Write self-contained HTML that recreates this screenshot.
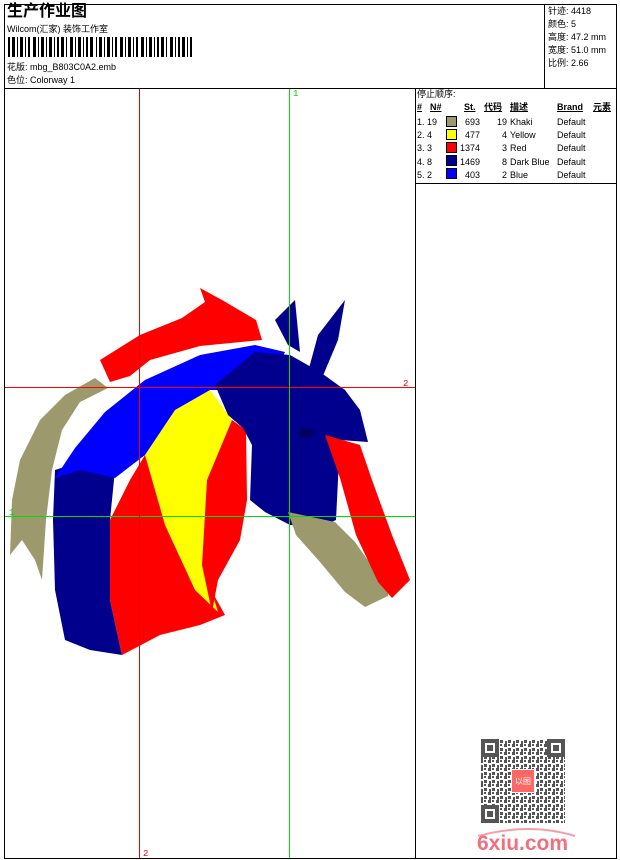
<!DOCTYPE html>
<html><head><meta charset="utf-8"><style>
*{margin:0;padding:0}
body{width:620px;height:860px;background:#fff;position:relative;overflow:hidden;font-family:"Liberation Sans","Noto Sans CJK SC",sans-serif;font-size:9px;color:#000}
.a{position:absolute;white-space:nowrap;line-height:11px}
.l{position:absolute;background:#000}
.u{text-decoration:underline;font-weight:bold}
.sw{position:absolute;width:9px;height:9px;border:1px solid #000}
</style></head><body>
<div class="l" style="left:4px;top:4px;width:613px;height:1px"></div>
<div class="l" style="left:4px;top:858px;width:613px;height:1px"></div>
<div class="l" style="left:4px;top:4px;width:1px;height:855px"></div>
<div class="l" style="left:616px;top:4px;width:1px;height:855px"></div>
<div class="l" style="left:4px;top:88px;width:613px;height:1px"></div>
<div class="l" style="left:544px;top:4px;width:1px;height:84px"></div>
<div class="l" style="left:415px;top:88px;width:1px;height:770px"></div>
<div class="l" style="left:415px;top:183px;width:202px;height:1px"></div>

<div class="a" style="left:7px;top:3px;font-size:16px;line-height:18px;font-weight:bold">生产作业图</div>
<div class="a" style="left:7px;top:24px">Wilcom(汇家) 装饰工作室</div>
<svg style="position:absolute;left:8px;top:37px" width="185" height="20">
<g fill="#000">
<rect x="0" y="0" width="2" height="20"/><rect x="4" y="0" width="3" height="20"/><rect x="9" y="0" width="1" height="20"/><rect x="12" y="0" width="3" height="20"/><rect x="17" y="0" width="1" height="20"/><rect x="20" y="0" width="2" height="20"/><rect x="25" y="0" width="3" height="20"/><rect x="30" y="0" width="1" height="20"/><rect x="33" y="0" width="3" height="20"/><rect x="38" y="0" width="1" height="20"/><rect x="41" y="0" width="3" height="20"/><rect x="46" y="0" width="1" height="20"/><rect x="49" y="0" width="2" height="20"/><rect x="53" y="0" width="3" height="20"/><rect x="58" y="0" width="1" height="20"/><rect x="62" y="0" width="3" height="20"/><rect x="67" y="0" width="1" height="20"/><rect x="70" y="0" width="3" height="20"/><rect x="75" y="0" width="1" height="20"/><rect x="78" y="0" width="2" height="20"/><rect x="82" y="0" width="3" height="20"/><rect x="88" y="0" width="1" height="20"/><rect x="91" y="0" width="3" height="20"/><rect x="96" y="0" width="1" height="20"/><rect x="99" y="0" width="3" height="20"/><rect x="104" y="0" width="1" height="20"/><rect x="107" y="0" width="2" height="20"/><rect x="112" y="0" width="3" height="20"/><rect x="117" y="0" width="1" height="20"/><rect x="120" y="0" width="3" height="20"/><rect x="125" y="0" width="1" height="20"/><rect x="128" y="0" width="2" height="20"/><rect x="133" y="0" width="3" height="20"/><rect x="138" y="0" width="1" height="20"/><rect x="141" y="0" width="3" height="20"/><rect x="146" y="0" width="1" height="20"/><rect x="149" y="0" width="2" height="20"/><rect x="153" y="0" width="3" height="20"/><rect x="158" y="0" width="1" height="20"/><rect x="162" y="0" width="3" height="20"/><rect x="167" y="0" width="1" height="20"/><rect x="170" y="0" width="2" height="20"/><rect x="174" y="0" width="3" height="20"/><rect x="179" y="0" width="1" height="20"/><rect x="182" y="0" width="2" height="20"/>
</g></svg>
<div class="a" style="left:7px;top:62px">花版: mbg_B803C0A2.emb</div>
<div class="a" style="left:7px;top:75px">色位: Colorway 1</div>

<div class="a" style="left:548px;top:5px;line-height:13px">针迹: 4418<br>颜色: 5<br>高度: 47.2 mm<br>宽度: 51.0 mm<br>比例: 2.66</div>

<div class="a" style="left:417px;top:89px">停止顺序:</div>
<div class="a u" style="left:417px;top:102px">#</div>
<div class="a u" style="left:430px;top:102px">N#</div>
<div class="a u" style="left:464px;top:102px">St.</div>
<div class="a u" style="left:484px;top:102px">代码</div>
<div class="a u" style="left:510px;top:102px">描述</div>
<div class="a u" style="left:557px;top:102px">Brand</div>
<div class="a u" style="left:593px;top:102px">元素</div>

<div class="a" style="left:417px;top:116px;line-height:13.2px">1. 19<br>2. 4<br>3. 3<br>4. 8<br>5. 2</div>
<div class="sw" style="left:446px;top:116px;background:#9c9a6c"></div>
<div class="sw" style="left:446px;top:129px;background:#ff0"></div>
<div class="sw" style="left:446px;top:142px;background:#f00"></div>
<div class="sw" style="left:446px;top:155px;background:#00008c"></div>
<div class="sw" style="left:446px;top:168px;background:#00f"></div>
<div class="a" style="left:455px;width:25px;text-align:right;top:116px;line-height:13.2px">693<br>477<br>1374<br>1469<br>403</div>
<div class="a" style="left:485px;width:22px;text-align:right;top:116px;line-height:13.2px">19<br>4<br>3<br>8<br>2</div>
<div class="a" style="left:510px;top:116px;line-height:13.2px">Khaki<br>Yellow<br>Red<br>Dark Blue<br>Blue</div>
<div class="a" style="left:557px;top:116px;line-height:13.2px">Default<br>Default<br>Default<br>Default<br>Default</div>

<svg style="position:absolute;left:0;top:0" width="620" height="860">
<defs>
<pattern id="qr" width="8" height="8" patternUnits="userSpaceOnUse">
<rect x="0" y="0" width="3" height="3" fill="#555"/><rect x="4" y="4" width="3" height="3" fill="#555"/><rect x="4" y="0" width="2" height="2" fill="#555"/><rect x="1" y="5" width="2" height="3" fill="#555"/>
</pattern>
<pattern id="st" width="3" height="4" patternUnits="userSpaceOnUse">
<rect x="0" y="0" width="3" height="4" fill="#fff" opacity=".35"/>
</pattern>
</defs>
<g stroke="none">
<polygon fill="#9c9a6c" points="10,555 12,500 20,460 40,420 65,395 95,378 108,388 80,402 62,430 52,470 46,520 42,580 35,560 22,540"/>
<polygon fill="#00008c" points="55,470 80,462 115,470 110,520 110,600 122,655 90,650 65,640 55,590 53,520"/>
<polygon fill="#f00" points="110,520 130,480 145,455 175,520 200,570 225,615 200,625 160,635 122,655 110,600"/>
<polygon fill="#ff0" points="145,455 175,410 210,390 232,420 208,480 202,560 218,612 195,590 165,525"/>
<polygon fill="#f00" points="232,420 246,430 247,500 240,540 218,580 212,612 202,565 207,480"/>
<polygon fill="#00f" points="55,478 75,448 105,412 145,380 200,355 255,345 285,352 275,372 232,390 210,390 175,410 145,455 115,478 80,470"/>
<polygon fill="#00008c" points="215,385 255,352 290,355 320,372 345,390 360,410 368,442 340,440 336,520 320,527 290,525 265,512 250,500 252,445 243,428 228,415"/>
<polygon fill="#9c9a6c" points="288,512 335,522 355,542 378,575 392,568 388,596 365,607 345,592 320,562 296,535"/>
<polygon fill="#f00" points="325,435 360,445 372,480 392,535 410,580 392,598 378,582 356,535 340,478"/>
<polygon fill="#00008c" points="275,320 295,300 300,352 288,345"/>
<polygon fill="#00008c" points="308,372 318,335 345,300 338,340 322,378"/>
<polygon fill="#f00" points="100,360 140,335 182,318 205,302 200,288 222,300 256,320 262,340 200,346 150,360 130,376 110,382"/>
<ellipse cx="306" cy="433" rx="8" ry="5" fill="#000060"/>
</g>
<rect x="5" y="387" width="410" height="1" fill="#f00"/>
<rect x="5" y="516" width="410" height="1" fill="#0d0"/>
<rect x="139" y="89" width="1" height="769" fill="#e00"/>
<rect x="289" y="89" width="1" height="769" fill="#0d0"/>
<text x="293" y="96" font-size="9" fill="#0c0" font-family="Liberation Mono,monospace">1</text>
<text x="9" y="515" font-size="9" fill="#0c0" font-family="Liberation Mono,monospace">1</text>
<text x="403" y="386" font-size="9" fill="#e00" font-family="Liberation Mono,monospace">2</text>
<text x="143" y="856" font-size="9" fill="#e00" font-family="Liberation Mono,monospace">2</text>
<rect x="481" y="739" width="84" height="84" fill="url(#qr)"/>
<g fill="#555">
<rect x="481" y="739" width="18" height="18" fill="#fff"/><rect x="481" y="739" width="18" height="18"/><rect x="485" y="743" width="10" height="10" fill="#fff"/><rect x="487" y="745" width="6" height="6"/>
<rect x="547" y="739" width="18" height="18" fill="#fff"/><rect x="547" y="739" width="18" height="18"/><rect x="551" y="743" width="10" height="10" fill="#fff"/><rect x="553" y="745" width="6" height="6"/>
<rect x="481" y="805" width="18" height="18" fill="#fff"/><rect x="481" y="805" width="18" height="18"/><rect x="485" y="809" width="10" height="10" fill="#fff"/><rect x="487" y="811" width="6" height="6"/>
</g>
<rect x="511" y="769" width="24" height="24" fill="#fff"/>
<rect x="512" y="770" width="22" height="22" fill="#f66"/>
<text x="523" y="784" font-size="8" fill="#fff" text-anchor="middle" font-family="Noto Sans CJK SC,sans-serif">以图</text>
<path d="M478,836 Q530,822 575,836" stroke="#f5a0a8" stroke-width="2" fill="none"/>
<text x="477" y="850" font-size="21" font-weight="bold" fill="#f07080" font-family="Liberation Sans,sans-serif">6xiu.com</text>
</svg>
</body></html>
